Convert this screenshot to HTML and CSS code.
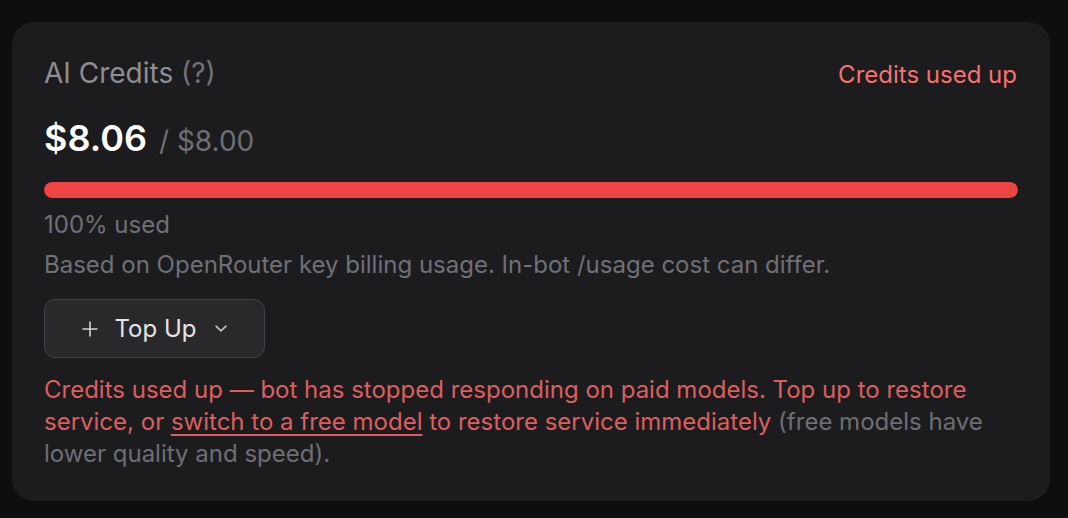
FILE: index.html
```html
<!DOCTYPE html>
<html>
<head>
<meta charset="utf-8">
<link rel="stylesheet" href="styles.css">
</head>
<body>
<div class="card">
  <div class="header">
    <div class="title">AI Credits <span class="help">(?)</span></div>
    <div class="status">Credits used up</div>
  </div>
  <div class="amount">
    <span class="used">$8.06</span>
    <span class="limit">/ $8.00</span>
  </div>
  <div class="bar"><div class="fill" style="width:100%"></div></div>
  <div class="pct">100% used</div>
  <div class="note">Based on OpenRouter key billing usage. In-bot /usage cost can differ.</div>
  <div class="actions">
    <button class="topup">
      <svg class="plus" width="16" height="16" viewBox="0 0 16 16"><path d="M8 1v14M1 8h14" stroke="currentColor" stroke-width="1.6" stroke-linecap="round" fill="none"/></svg>
      <span>Top Up</span>
      <svg class="chev" width="14" height="9" viewBox="0 0 14 9"><path d="M2 2.2l5 4.6 5-4.6" stroke="currentColor" stroke-width="1.6" stroke-linecap="round" stroke-linejoin="round" fill="none"/></svg>
    </button>
  </div>
  <p class="warn">Credits used up — bot has stopped responding on paid models. Top up to restore service, or <a class="link" href="#">switch to a free model</a> to restore service immediately <span class="muted">(free models have lower quality and speed).</span></p>
</div>
</body>
</html>
```
FILE: styles.css
```css
html, body {
  margin: 0;
  padding: 0;
  background: #0e0e10;
}
body {
  font-family: Inter, "Noto Sans", sans-serif;
  padding: 22px 18px 0 12px;
}
.card {
  width: 1038px;
  height: 479px;
  box-sizing: border-box;
  background: #1c1c1e;
  border-radius: 22px;
  padding: 33px 32px 0 32px;
  display: flex;
  flex-direction: column;
}
.header {
  display: flex;
  justify-content: space-between;
  align-items: baseline;
  line-height: 36px;
}
.title {
  font-size: 28px;
  color: #8e8e93;
}
.help {
  color: #717178;
}
.status {
  font-size: 24px;
  color: #f87171;
  padding-right: 1px;
}
.amount {
  margin-top: 23px;
  display: flex;
  align-items: baseline;
  gap: 12px;
  line-height: 44px;
}
.used {
  font-size: 36px;
  font-weight: 600;
  color: #ffffff;
}
.limit {
  font-size: 28px;
  color: #6e6e75;
}
.bar {
  margin-top: 19px;
  height: 16px;
  border-radius: 8px;
  background: #2c2c30;
  overflow: hidden;
}
.fill {
  height: 100%;
  background: #ef4444;
  border-radius: 8px;
}
.pct {
  margin-top: 11px;
  font-size: 24px;
  line-height: 32px;
  color: #707077;
}
.note {
  margin-top: 8px;
  font-size: 24px;
  line-height: 32px;
  color: #707077;
}
.actions {
  margin-top: 18px;
  display: flex;
}
.topup {
  display: flex;
  align-items: center;
  gap: 17px;
  height: 59px;
  padding: 0 36px 0 36.5px;
  background: #29292c;
  border: 1.5px solid #414147;
  border-radius: 11px;
  color: #e4e4e7;
  font-family: Inter, "Noto Sans", sans-serif;
  font-size: 24px;
  font-weight: 400;
}
.plus { color: #d4d4d8; }
.chev { color: #c4c4c9; }
.warn {
  margin: 16px 0 0 0;
  font-size: 24px;
  line-height: 32px;
  color: #dc5f5f;
}
.link {
  color: #dc5f5f;
  text-decoration: underline;
  text-underline-offset: 4px;
  text-decoration-thickness: 1.5px;
}
.muted {
  color: #6e6e75;
}
```
